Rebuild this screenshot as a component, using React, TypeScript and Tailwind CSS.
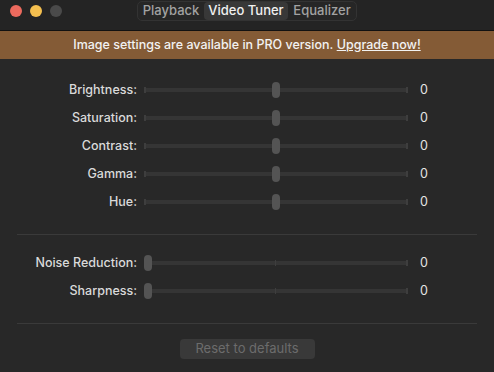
import React from 'react';

const font = { fontFamily: 'Inter, "Noto Sans", sans-serif' };

type SliderProps = { label: string; value: number; centered?: boolean };

const Slider: React.FC<SliderProps> = ({ label, value, centered }) => (
  <div className="flex items-center h-[28px]">
    <div className="w-[120px] text-right text-[12.5px] text-[#dadada] font-medium whitespace-nowrap">{label}</div>
    <div className="relative ml-[7px] w-[264px] h-[16px] flex items-center">
      <div className="w-full h-[4px] rounded-full bg-[#353535]" />
      <div className="absolute left-0 top-[5px] w-[2px] h-[6px] bg-[#3e3e3e]" />
      <div className="absolute left-[131px] top-[5px] w-[1px] h-[6px] bg-[#3e3e3e]" />
      <div className="absolute right-0 top-[5px] w-[2px] h-[6px] bg-[#3e3e3e]" />
      <div
        className={
          centered
            ? 'absolute left-[128px] top-0 w-[8px] h-[16px] rounded-full bg-[#545454]'
            : 'absolute left-0 top-0 w-[8px] h-[16px] rounded-full bg-[#545454]'
        }
      />
    </div>
    <div className="ml-[12px] text-[12.5px] text-[#e4e4e4]">{value}</div>
  </div>
);

const tabs = [
  { name: 'Playback', w: 'w-[66px]' },
  { name: 'Video Tuner', w: 'w-[84px]' },
  { name: 'Equalizer', w: 'w-[68px]' },
];

export default function App() {
  return (
    <div className="w-[494px] h-[372px] bg-[#282828] flex flex-col overflow-hidden select-none" style={font}>
      {/* title bar */}
      <div className="relative h-[31px] bg-[#242424] border-b border-[#111] flex items-start">
        <div className="flex gap-[8px] pl-[10px] pt-[5px]">
          <div className="w-[12px] h-[12px] rounded-full bg-[#ec6a5e]" />
          <div className="w-[12px] h-[12px] rounded-full bg-[#f4bf4f]" />
          <div className="w-[12px] h-[12px] rounded-full bg-[#4a4a4a]" />
        </div>
        <div className="absolute left-[137px] top-[1px] w-[220px] h-[20px] rounded-[5px] border border-[#333] bg-[#262626] flex items-center">
          {tabs.map((t) => (
            <div
              key={t.name}
              className={
                t.name === 'Video Tuner'
                  ? `${t.w} h-[18px] rounded-[4px] bg-[#383838] text-[#f0f0f0] text-[13px] font-medium flex items-center justify-center whitespace-nowrap`
                  : `${t.w} h-[18px] text-[#a2a2a2] text-[13px] font-medium flex items-center justify-center whitespace-nowrap`
              }
            >
              {t.name}
            </div>
          ))}
        </div>
      </div>

      {/* pro banner */}
      <div className="h-[28px] bg-[#845b36] flex items-center justify-center text-[12.5px] text-[#f2f2f2] font-medium">
        Image settings are available in PRO version.&nbsp;<span className="underline">Upgrade now!</span>
      </div>

      {/* content */}
      <div className="flex flex-col px-[17px] pt-[17px]">
        <div className="flex flex-col">
          <Slider label="Brightness:" value={0} centered />
          <Slider label="Saturation:" value={0} centered />
          <Slider label="Contrast:" value={0} centered />
          <Slider label="Gamma:" value={0} centered />
          <Slider label="Hue:" value={0} centered />
        </div>
        <div className="mt-[18px] h-[1px] bg-[#3a3a3a]" />
        <div className="flex flex-col mt-[14px]">
          <Slider label="Noise Reduction:" value={0} />
          <Slider label="Sharpness:" value={0} />
        </div>
        <div className="mt-[18px] h-[1px] bg-[#3a3a3a]" />
        <div className="flex justify-center mt-[15px]">
          <div className="w-[135px] h-[20px] rounded-[4px] bg-[#393939] text-[#6c6c6c] text-[13px] flex items-center justify-center">
            Reset to defaults
          </div>
        </div>
      </div>
    </div>
  );
}
